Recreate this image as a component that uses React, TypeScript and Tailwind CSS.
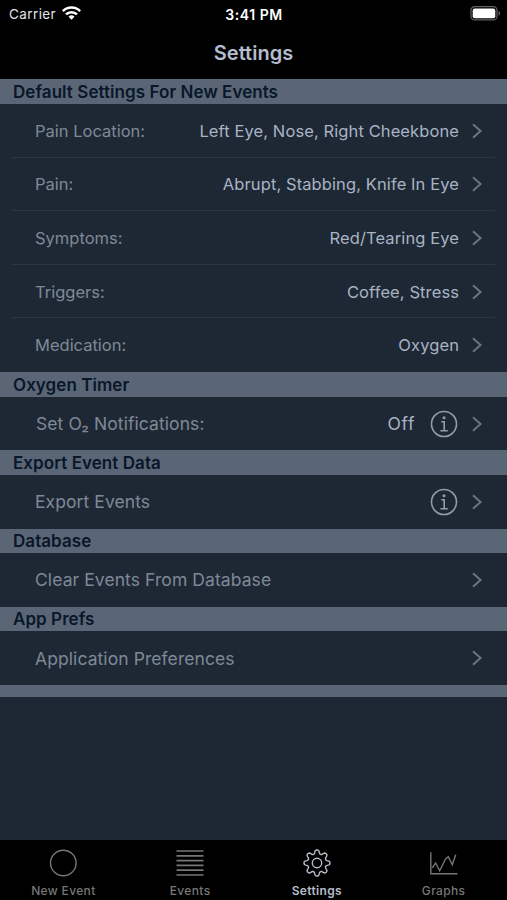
import type { ReactNode } from 'react'

type Row = { label: string; value?: string; info?: boolean }
type Section = { title: string; rows: Row[] }

const SECTIONS: Section[] = [
  {
    title: 'Default Settings For New Events',
    rows: [
      { label: 'Pain Location:', value: 'Left Eye, Nose, Right Cheekbone' },
      { label: 'Pain:', value: 'Abrupt, Stabbing, Knife In Eye' },
      { label: 'Symptoms:', value: 'Red/Tearing Eye' },
      { label: 'Triggers:', value: 'Coffee, Stress' },
      { label: 'Medication:', value: 'Oxygen' },
    ],
  },
  { title: 'Oxygen Timer', rows: [{ label: 'Set O₂ Notifications:', value: 'Off', info: true }] },
  { title: 'Export Event Data', rows: [{ label: 'Export Events', info: true }] },
  { title: 'Database', rows: [{ label: 'Clear Events From Database' }] },
  { title: 'App Prefs', rows: [{ label: 'Application Preferences' }] },
]

// Eight rounded teeth around the hub
const GEAR = Array.from({ length: 160 }, (_, i) => {
  const a = (i / 160) * Math.PI * 2
  const r = 11.2 + 2 * Math.tanh(1.5 * Math.cos(8 * a))
  return `${i ? 'L' : 'M'}${(14 + r * Math.sin(a)).toFixed(2)} ${(14 - r * Math.cos(a)).toFixed(2)}`
}).join('') + 'Z'

function Chevron() {
  return (
    <svg width="10" height="16" viewBox="0 0 10 16" fill="none" stroke="#6d7580" strokeWidth="1.9" className="shrink-0">
      <path d="M1 1.2 8.6 8 1 14.8" />
    </svg>
  )
}

function InfoIcon() {
  return (
    <svg width="28" height="28" viewBox="0 0 28 28" fill="none" stroke="#929dab" strokeWidth="1.6" className="shrink-0">
      <circle cx="14" cy="14" r="12.5" />
      <circle cx="14" cy="7.8" r="1.5" fill="#929dab" stroke="none" />
      <path d="M11.2 11.8h3v8.7M10.4 20.7h7.4" />
    </svg>
  )
}

function SettingsRow({ row, large }: { row: Row; large: boolean }) {
  return (
    <div
      className={`flex h-full items-center pr-[25px] ${large ? 'text-[17.5px]' : 'text-[16.5px]'} ${row.label.startsWith('Set') ? 'pl-9' : 'pl-[35px]'}`}
    >
      <span className={`pt-px text-[#7e8997] ${large ? 'tracking-[0.08px]' : 'tracking-normal'}`}>{row.label}</span>
      <span className={`ml-auto pt-px text-[#a8b3c4] ${large ? 'tracking-[0.6px]' : 'tracking-[0.1px]'}`}>{row.value}</span>
      {row.info && (
        <span className="ml-[15px]">
          <InfoIcon />
        </span>
      )}
      <span className={row.info ? 'ml-[14px]' : 'ml-[13px]'}>
        <Chevron />
      </span>
    </div>
  )
}

function StatusBar() {
  return (
    <div className="grid h-7 grid-cols-3 items-center pr-[6px] pl-[9px] text-[13.5px] text-[#e4e4e4]">
      <div className="flex items-center gap-[6px]">
        <span className="tracking-[0.4px]">Carrier</span>
        <svg width="19" height="14" viewBox="0 0 19 14" fill="none" stroke="#fff" strokeWidth="2.5" className="-mt-[2px]">
          <path d="M.8 5.1a12.4 12.4 0 0 1 17.4 0M4 8.4a7.8 7.8 0 0 1 11 0" />
          <path d="M9.5 13.7 6.5 10.7a4.3 4.3 0 0 1 6 0Z" fill="#fff" stroke="none" />
        </svg>
      </div>
      <span className="pr-[2px] text-center text-[14px] font-semibold tracking-[0.55px] text-white">3:41 PM</span>
      <svg width="31" height="15" viewBox="0 0 31 15" className="-mt-px justify-self-end">
        <rect x="1" y=".7" width="26" height="13.2" rx="3.6" fill="none" stroke="#626262" strokeWidth="1.2" />
        <rect x="2.7" y="2.4" width="22.6" height="9.8" rx="2" fill="#fff" />
        <path d="M28.5 5v4.6c2.2-.7 2.2-3.9 0-4.6Z" fill="#626262" />
      </svg>
    </div>
  )
}

function Tab({ label, active, children }: { label: string; active?: boolean; children: ReactNode }) {
  return (
    <div className={`flex flex-1 flex-col items-center pt-[9px] ${active ? 'text-[#b6bdc8]' : 'text-[#767676]'}`}>
      <svg width="28" height="28" viewBox="0 0 28 28" fill="none" stroke="currentColor" strokeWidth="1.4">
        {children}
      </svg>
      <span className={`mt-[6px] text-[12px] leading-4 tracking-[0.35px] ${active ? 'font-semibold' : 'font-medium'}`}>
        {label}
      </span>
    </div>
  )
}

export default function App() {
  return (
    <div className="flex h-[900px] w-[507px] flex-col overflow-hidden bg-[#1e2834] font-['Inter',sans-serif]">
      <header className="h-[79.3px] shrink-0 bg-black">
        <StatusBar />
        <h1 className="pt-[11px] text-center text-[20px] leading-7 font-semibold text-[#b4bccd]">Settings</h1>
      </header>

      <main className="flex-1">
        {SECTIONS.map((section) => (
          <section key={section.title}>
            <h2 className="flex h-[24.6px] items-center bg-[#5a6675] pt-[2px] pl-[13px] text-[17px] font-semibold tracking-[0.06px] text-[#09172a]">
              {section.title}
            </h2>
            {section.rows.map((row, i) => (
              <div key={row.label} className="relative h-[53.65px]">
                <SettingsRow row={row} large={section.rows.length === 1} />
                {i < section.rows.length - 1 && <div className="absolute right-3 bottom-0 left-3 h-px bg-[#2c3641]" />}
              </div>
            ))}
          </section>
        ))}
        <div className="h-3 bg-[#5a6675]" />
      </main>

      <nav className="flex h-[60px] shrink-0 bg-black">
        <Tab label="New Event">
          <circle cx="14.3" cy="14" r="12.8" />
        </Tab>
        <Tab label="Events">
          <path d="M.5 2h27M.5 6.8h27M.5 11.6h27M.5 16.4h27M.5 21.2h27M.5 26h27" strokeWidth="1.7" />
        </Tab>
        <Tab label="Settings" active>
          <path d={GEAR} />
          <circle cx="14" cy="14" r="4.7" />
        </Tab>
        <Tab label="Graphs">
          <path d="M.8 3.3v21.4h26.7M2.2 18.8l3.5-4.8 4 7.7 6-12 2.6-2 4 8L25.7 5.7" />
        </Tab>
      </nav>
    </div>
  )
}
